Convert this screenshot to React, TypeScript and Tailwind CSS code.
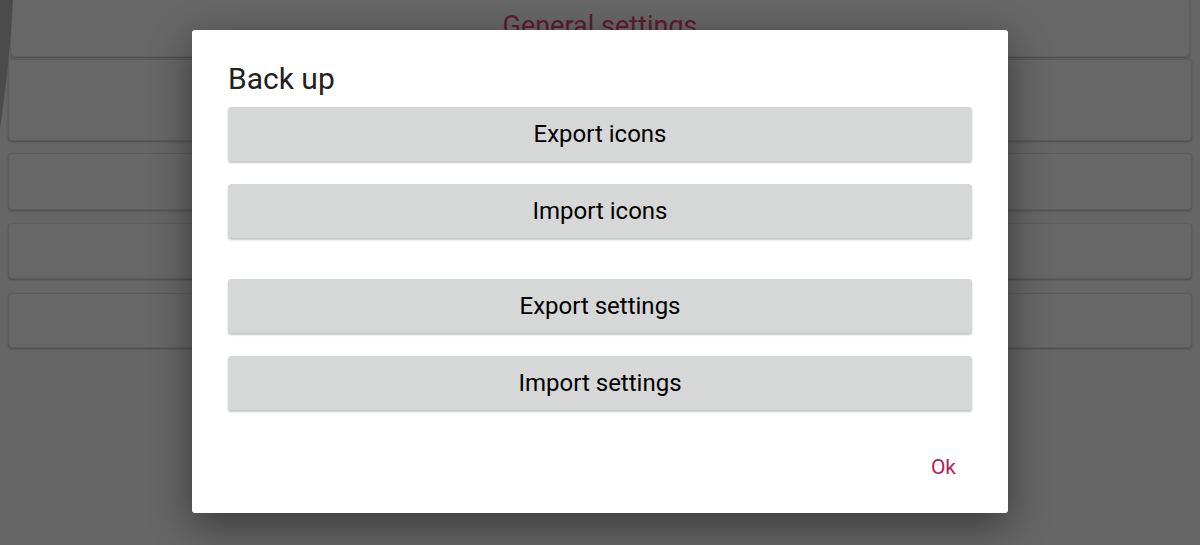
import React from "react";

// Settings page dimmed behind a "Back up" dialog

const font = { fontFamily: "Roboto, 'Noto Sans', Arial, sans-serif" };

function BackgroundPage() {
  return (
    <div className="flex h-full flex-col px-2">
      <div className="relative h-[57px] shrink-0 rounded-b-sm border border-t-0 border-[#5c5c5c] bg-[#676767] shadow-[0_1px_2px_rgba(0,0,0,0.25)] mx-[2px]">
        <div className="pt-[9px] text-center text-[27px] leading-[34px] text-[#5e1a30]">General settings</div>
      </div>
      <div className="mt-[2px] h-[82px] shrink-0 rounded-sm border border-[#5c5c5c] bg-[#676767] shadow-[0_1px_2px_rgba(0,0,0,0.25)]" />
      <div className="mt-[12px] h-[57px] shrink-0 rounded-sm border border-[#5c5c5c] bg-[#676767] shadow-[0_1px_2px_rgba(0,0,0,0.25)]" />
      <div className="mt-[13px] h-[56px] shrink-0 rounded-sm border border-[#5c5c5c] bg-[#676767] shadow-[0_1px_2px_rgba(0,0,0,0.25)]" />
      <div className="mt-[14px] h-[55px] shrink-0 rounded-sm border border-[#5c5c5c] bg-[#676767] shadow-[0_1px_2px_rgba(0,0,0,0.25)]" />
    </div>
  );
}

function DialogButton({ label, className = "" }: { label: string; className?: string }) {
  return (
    <button
      className={`flex h-[54px] w-full items-center justify-center rounded-[3px] bg-[#d6d7d7] text-[24px] text-black shadow-[0_2px_2px_rgba(0,0,0,0.22)] ${className}`}
    >
      {label}
    </button>
  );
}

export default function App() {
  return (
    <div className="relative h-[545px] w-[1200px] overflow-hidden bg-[#666666]" style={font}>
      <BackgroundPage />

      {/* dark curved edge at the far left */}
      <svg className="absolute left-0 top-0" width="16" height="130" viewBox="0 0 16 130">
        <path d="M0 0 H13 C11 40 6 90 0 128 Z" fill="#4b4b4b" />
      </svg>

      {/* ── Dialog ─────────────────────────────── */}
      <div className="absolute inset-0 flex items-start justify-center pt-[30px]">
        <div className="flex w-[816px] flex-col rounded-[3px] bg-white px-[36px] pt-[31px] pb-[21px] shadow-[0_12px_40px_rgba(0,0,0,0.45)]">
          <h2 className="text-[30px] leading-[35px] text-[#212121]">Back up</h2>
          <DialogButton label="Export icons" className="mt-[11px]" />
          <DialogButton label="Import icons" className="mt-[23px]" />
          <DialogButton label="Export settings" className="mt-[41px]" />
          <DialogButton label="Import settings" className="mt-[23px]" />
          <div className="mt-[34px] flex h-12 justify-end">
            <button className="px-4 text-[21px] text-[#b81d5b]">Ok</button>
          </div>
        </div>
      </div>
    </div>
  );
}
